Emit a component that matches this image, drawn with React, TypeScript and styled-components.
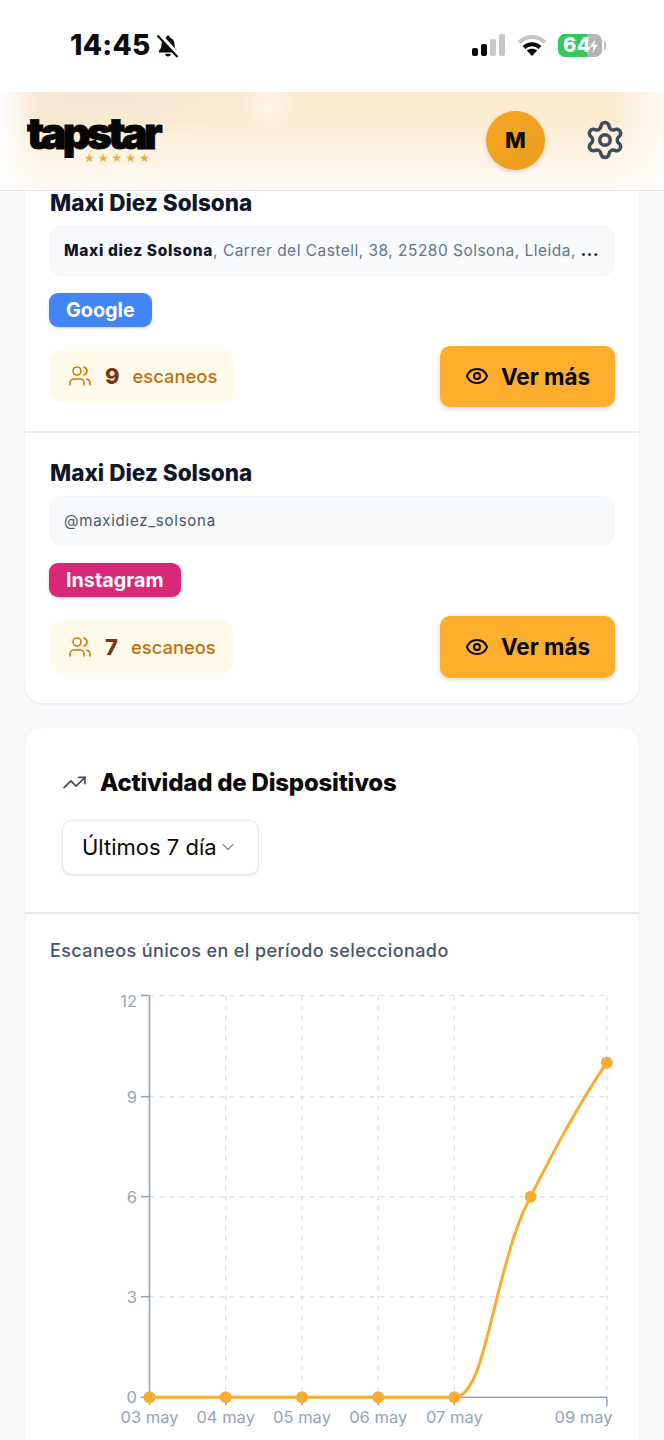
import type { ReactNode } from "react";
import styled, { createGlobalStyle } from "styled-components";
import { ChevronDown, Eye, Settings, TrendingUp, Users } from "lucide-react";

const GlobalStyle = createGlobalStyle`
  html, body {
    margin: 0;
    padding: 0;
    background: #f8fafc;
    font-family: Inter, "Liberation Sans", sans-serif;
  }
  * {
    box-sizing: border-box;
  }
`;

const Page = styled.div`
  width: 664px;
  height: 1440px;
  overflow: hidden;
  background: #f8fafc;
`;

const StatusBar = styled.div`
  height: 92px;
  background: #fff;
  display: flex;
  align-items: flex-start;
  justify-content: space-between;
  padding: 27px 62px 0 70px;
`;

const Clock = styled.div`
  display: flex;
  align-items: center;
  gap: 5px;
  height: 36px;
  font-size: 28px;
  font-weight: 800;
  letter-spacing: 0.3px;
  color: #0b0b0b;
`;

const StatusIcons = styled.div`
  display: flex;
  align-items: center;
  gap: 11px;
  height: 36px;
`;

const Battery = styled.div`
  position: relative;
  width: 44px;
  height: 23px;
  border-radius: 7px;
  background: linear-gradient(90deg, #34c759 0 66%, #b4b4b4 66% 100%);
  color: #fff;
  font-size: 20px;
  font-weight: 800;
  line-height: 23px;
  padding-left: 5px;
  letter-spacing: 0.5px;
  &::after {
    content: "";
    position: absolute;
    right: -4px;
    top: 7px;
    width: 2px;
    height: 9px;
    border-radius: 0 2px 2px 0;
    background: #c4c4c4;
  }
`;

const BatteryBolt = styled.svg`
  position: absolute;
  right: 3px;
  top: 4px;
`;

const Header = styled.header`
  height: 99px;
  display: flex;
  align-items: center;
  padding: 0 38px 2px 27px;
  border-bottom: 1px solid #e5e7eb;
  background:
    linear-gradient(90deg, #fff 0, rgba(255, 255, 255, 0) 40px, rgba(255, 255, 255, 0) 610px, rgba(255, 255, 255, 0.8) 664px),
    linear-gradient(180deg, rgba(255, 255, 255, 0) 30%, #fffaf3 92%),
    radial-gradient(ellipse 30px 30px at 270px 14px, rgba(255, 255, 255, 0.5), rgba(255, 255, 255, 0)),
    radial-gradient(ellipse 170px 50px at 100px 0, #f2e6d2, rgba(242, 230, 210, 0)),
    #fdebd2;
`;

const Logo = styled.div`
  width: 135px;
  display: flex;
  flex-direction: column;
`;

const LogoWord = styled.div`
  height: 36px;
  color: #050505;
  font-size: 43px;
  font-weight: 900;
  line-height: 34px;
  letter-spacing: -3.7px;
  -webkit-text-stroke: 0.8px #050505;
`;

const LogoStars = styled.div`
  margin-left: 57px;
  height: 12px;
  color: #f6a935;
  font-family: "DejaVu Sans", sans-serif;
  font-size: 12px;
  line-height: 12px;
  letter-spacing: 3px;
  white-space: nowrap;
`;

const Avatar = styled.div`
  margin-left: auto;
  width: 59px;
  height: 59px;
  border-radius: 50%;
  background: linear-gradient(135deg, #f5a623, #ea9c1d);
  box-shadow: 0 2px 4px rgba(0, 0, 0, 0.15);
  display: flex;
  align-items: center;
  justify-content: center;
  font-size: 22px;
  font-weight: 800;
  color: #0a0a0a;
`;

const SettingsButton = styled.div`
  margin-left: 39px;
  display: flex;
  color: #3f4b5f;
`;

const Main = styled.main`
  padding: 0 25px;
`;

const Card = styled.section`
  background: #fff;
  border-radius: 0 0 18px 18px;
  box-shadow: 0 1px 3px rgba(15, 23, 42, 0.08);
`;

const ChartCard = styled.section`
  margin-top: 25.3px;
  background: #fff;
  border-radius: 18px 18px 0 0;
  box-shadow: 0 1px 3px rgba(15, 23, 42, 0.08);
`;

const Entry = styled.div<{ $first?: boolean }>`
  padding: ${(p) => (p.$first ? "0 25px 24px" : "28px 25px 25px")};
  border-bottom: ${(p) => (p.$first ? "2px solid #e8ebf1" : "none")};
`;

const EntryName = styled.h3`
  margin: 0;
  font-size: 22.5px;
  line-height: 24px;
  font-weight: 800;
  color: #0f172a;
`;

const AddressBox = styled.div`
  margin-top: 10.7px;
  height: 50px;
  padding: 0 13px;
  border: 1px solid #f1f5f9;
  border-radius: 12px;
  background: #f8fafc;
  font-size: 15.5px;
  line-height: 48px;
  letter-spacing: 0.48px;
  color: #64748b;
  white-space: nowrap;
  overflow: hidden;
  strong {
    font-weight: 800;
    letter-spacing: 0.65px;
    color: #0f172a;
  }
`;

const HandleText = styled.span`
  font-size: 15px;
  letter-spacing: 0.75px;
  color: #475569;
`;

const Badge = styled.div<{ $color: string }>`
  display: inline-block;
  margin: 17.3px 0 0 -1px;
  padding: 0 17px;
  height: 34px;
  border-radius: 9px;
  background: ${(p) => p.$color};
  box-shadow: 0 1px 3px rgba(15, 23, 42, 0.2);
  color: #fff;
  font-size: 19.8px;
  font-weight: 700;
  line-height: 34px;
  vertical-align: top;
`;

const StatRow = styled.div`
  margin-top: 18.7px;
  display: flex;
  align-items: center;
  justify-content: space-between;
`;

const StatPill = styled.div`
  height: 54px;
  padding: 0 18px;
  border-radius: 14px;
  background: #fffbeb;
  display: flex;
  align-items: center;
  color: #d97706;
`;

const StatNumber = styled.span`
  margin-left: 13px;
  font-size: 22px;
  font-weight: 800;
  color: #78350f;
`;

const StatLabel = styled.span`
  margin-left: 13px;
  font-size: 18.4px;
  font-weight: 500;
  color: #c2700f;
`;

const MoreButton = styled.button`
  width: 175px;
  height: 61.6px;
  margin-right: -1px;
  border: none;
  border-radius: 10px;
  background: #ffad2c;
  box-shadow: 0 2px 4px rgba(15, 23, 42, 0.16);
  display: flex;
  align-items: center;
  justify-content: center;
  gap: 12px;
  color: #050505;
  font-family: inherit;
  font-size: 22.4px;
  font-weight: 700;
`;

const ChartHead = styled.div`
  padding: 36px 37px 37px;
  border-bottom: 2px solid #e8e8ea;
`;

const ChartTitle = styled.div`
  display: flex;
  align-items: center;
  gap: 13px;
  height: 38px;
  font-size: 24px;
  font-weight: 800;
  letter-spacing: -0.22px;
  color: #0a0a0a;
  svg {
    color: #3f4b5f;
  }
`;

const RangeSelect = styled.div`
  margin-top: 18px;
  width: 197px;
  height: 55px;
  padding-left: 19px;
  border: 1.5px solid #e4e6ea;
  border-radius: 10px;
  background: #fff;
  box-shadow: 0 1px 3px rgba(0, 0, 0, 0.1);
  display: flex;
  align-items: center;
  gap: 1px;
  font-size: 22px;
  color: #0a0a0a;
  svg {
    color: #8a8f98;
  }
`;

const ChartBody = styled.div`
  padding: 26px 25px 0;
`;

const ChartCaption = styled.p`
  margin: 0;
  font-size: 18px;
  line-height: 22px;
  font-weight: 500;
  letter-spacing: 0.4px;
  color: #475569;
`;

const ChartSvg = styled.svg`
  display: block;
  margin-left: -50px;
  text {
    font-family: Inter, sans-serif;
    font-size: 16.5px;
    fill: #94a3b8;
  }
`;

const AXIS_X = 149.5;
const BASE_Y = 435.3;
const GRID_X = [225.7, 302, 378.2, 454.4, 606.8];
const Y_TICKS = [
  { label: "12", y: 33.5, textY: 44.5 },
  { label: "9", y: 134.7, textY: 140.7 },
  { label: "6", y: 234.7, textY: 240.7 },
  { label: "3", y: 334.7, textY: 340.7 },
  { label: "0", y: BASE_Y, textY: 441.3 },
];
const X_LABELS = [
  { label: "03 may", x: 149.5 },
  { label: "04 may", x: 225.7 },
  { label: "05 may", x: 302 },
  { label: "06 may", x: 378.2 },
  { label: "07 may", x: 454.4 },
  { label: "09 may", x: 583.5 },
];
const POINTS: [number, number][] = [
  [149.5, BASE_Y],
  [225.7, BASE_Y],
  [302, BASE_Y],
  [378.2, BASE_Y],
  [454.4, BASE_Y],
  [530.7, 234.7],
  [606.8, 100.7],
];

const BellSlashIcon = () => (
  <svg width="24" height="25" viewBox="0 0 24 25">
    <path
      d="M12 2.500c-.9 0-1.600.7-1.600 1.600v.5C7.300 5.400 5.500 8 5.500 11c0 3.400-.8 5-2.500 6.600V19.500h18v-1.900c-1.700-1.600-2.500-3.200-2.500-6.600 0-3-1.800-5.600-4.900-6.400v-.5c0-.9-.7-1.600-1.600-1.600z"
      fill="#0b0b0b"
    />
    <path d="M9.300 20.700a2.700 2.700 0 0 0 5.400 0z" fill="#0b0b0b" />
    <path d="M3 1.500L23 23" stroke="#fff" strokeWidth="4.500" />
    <path d="M1.500 2.500L21.500 24" stroke="#0b0b0b" strokeWidth="2" />
  </svg>
);

const SignalIcon = () => (
  <svg width="34" height="24" viewBox="0 0 34 24">
    <rect x="0" y="15" width="6" height="8" rx="2" fill="#0a0a0a" />
    <rect x="9" y="11" width="6" height="12" rx="2" fill="#0a0a0a" />
    <rect x="18" y="6" width="6" height="17" rx="2" fill="#c8c8c8" />
    <rect x="27" y="1" width="6" height="22" rx="2" fill="#c8c8c8" />
  </svg>
);

const WifiIcon = () => (
  <svg width="30" height="24" viewBox="0 0 30 24" fill="none">
    <path d="M2 9.500C9.500 2 20.500 2 28 9.500" stroke="#c6c6c6" strokeWidth="4" />
    <path d="M7 14.500C11.500 10 18.500 10 23 14.500" stroke="#0a0a0a" strokeWidth="4" />
    <path d="M15 23L9.800 17.500C12.800 15 17.200 15 20.200 17.500Z" fill="#0a0a0a" />
  </svg>
);

const BoltIcon = () => (
  <BatteryBolt width="10" height="16" viewBox="0 0 11 16">
    <path d="M7 0L1 9H5L3.500 16L10 6.500H6Z" fill="#fff" fillOpacity="0.85" />
  </BatteryBolt>
);

const ActivityChart = () => (
  <ChartSvg width="664" height="478" viewBox="0 0 664 478">
    {Y_TICKS.slice(0, 4).map((t) => (
      <line key={t.label} x1={AXIS_X} x2="607" y1={t.y} y2={t.y} stroke="#dfe3ea" strokeWidth="1.4" strokeDasharray="5 5" />
    ))}
    {GRID_X.map((x) => (
      <line key={x} x1={x} x2={x} y1={33.5} y2={BASE_Y} stroke="#dfe3ea" strokeWidth="1.4" strokeDasharray="5 5" />
    ))}
    <path
      d={`M${AXIS_X} 33.500V${BASE_Y}H606.800M149.500 ${BASE_Y}v8M225.700 ${BASE_Y}v8M302 ${BASE_Y}v8M378.200 ${BASE_Y}v8M454.400 ${BASE_Y}v8M606.800 ${BASE_Y}v9`}
      fill="none"
      stroke="#94a3b8"
      strokeWidth="1.6"
    />
    {Y_TICKS.map((t) => (
      <g key={t.label}>
        <line x1="141" x2={AXIS_X} y1={t.y} y2={t.y} stroke="#94a3b8" strokeWidth="1.6" />
        <text x="137" y={t.textY} textAnchor="end">
          {t.label}
        </text>
      </g>
    ))}
    {X_LABELS.map((t) => (
      <text key={t.label} x={t.x} y="461" textAnchor="middle">
        {t.label}
      </text>
    ))}
    <path
      d={`M149.500 ${BASE_Y}H454.400C476 ${BASE_Y} 486 378 499 328C510 286 517 260 530.700 234.700C554 188 580 140 606.800 100.700`}
      fill="none"
      stroke="#f8ac33"
      strokeWidth="3"
    />
    {POINTS.map(([x, y]) => (
      <circle key={x} cx={x} cy={y} r="6" fill="#f8ac33" />
    ))}
  </ChartSvg>
);

const ScanEntry = ({
  first,
  badge,
  badgeColor,
  count,
  children,
}: {
  first?: boolean;
  badge: string;
  badgeColor: string;
  count: number;
  children: ReactNode;
}) => (
  <Entry $first={first}>
    <EntryName>Maxi Diez Solsona</EntryName>
    <AddressBox>{children}</AddressBox>
    <Badge $color={badgeColor}>{badge}</Badge>
    <StatRow>
      <StatPill>
        <Users size={24} strokeWidth={1.6} />
        <StatNumber>{count}</StatNumber>
        <StatLabel>escaneos</StatLabel>
      </StatPill>
      <MoreButton>
        <Eye size={24} strokeWidth={2} />
        Ver más
      </MoreButton>
    </StatRow>
  </Entry>
);

export default function App() {
  return (
    <Page>
      <GlobalStyle />
      <StatusBar>
        <Clock>
          14:45
          <BellSlashIcon />
        </Clock>
        <StatusIcons>
          <SignalIcon />
          <WifiIcon />
          <Battery>
            64
            <BoltIcon />
          </Battery>
        </StatusIcons>
      </StatusBar>
      <Header>
        <Logo>
          <LogoWord>tapstar</LogoWord>
          <LogoStars>★★★★★</LogoStars>
        </Logo>
        <Avatar>M</Avatar>
        <SettingsButton>
          <Settings size={42} strokeWidth={2} />
        </SettingsButton>
      </Header>
      <Main>
        <Card>
          <ScanEntry first badge="Google" badgeColor="#4285f4" count={9}>
            <strong>Maxi diez Solsona</strong>, Carrer del Castell, 38, 25280 Solsona, Lleida, <strong>...</strong>
          </ScanEntry>
          <ScanEntry badge="Instagram" badgeColor="#db2777" count={7}>
            <HandleText>@maxidiez_solsona</HandleText>
          </ScanEntry>
        </Card>
        <ChartCard>
          <ChartHead>
            <ChartTitle>
              <TrendingUp size={25} strokeWidth={1.6} />
              Actividad de Dispositivos
            </ChartTitle>
            <RangeSelect>
              Últimos 7 día
              <ChevronDown size={20} strokeWidth={1.6} />
            </RangeSelect>
          </ChartHead>
          <ChartBody>
            <ChartCaption>Escaneos únicos en el período seleccionado</ChartCaption>
            <ActivityChart />
          </ChartBody>
        </ChartCard>
      </Main>
    </Page>
  );
}
